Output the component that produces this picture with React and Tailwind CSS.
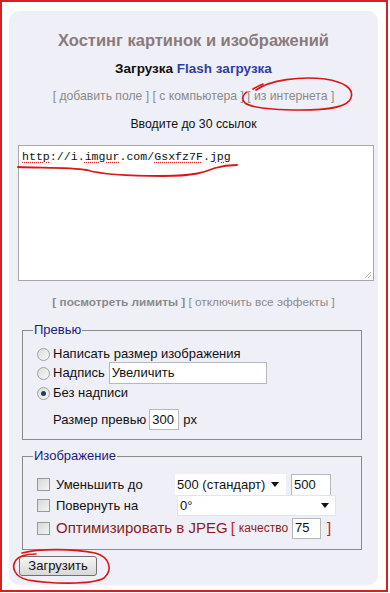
import React from 'react';

const Radio = ({ checked }) => (
  <span className="relative inline-block w-[13px] h-[13px] rounded-full border border-[#a0a0a0] bg-gradient-to-br from-[#dcdcdc] to-[#f8f8f8] shrink-0">
    {checked && <span className="absolute left-[3px] top-[3px] w-[5px] h-[5px] rounded-full bg-[#1f3f70]" />}
  </span>
);

const Check = () => (
  <span className="inline-block w-[13px] h-[13px] border border-[#999] bg-gradient-to-br from-[#d8d8d8] to-[#f4f4f4] shrink-0" />
);

const Arrow = () => (
  <svg width="8" height="5" viewBox="0 0 8 5" className="shrink-0">
    <path d="M0 0 L8 0 L4 5 Z" fill="#111" />
  </svg>
);

const Sp = ({ children }) => (
  <span className="underline decoration-dotted decoration-[#d22] underline-offset-2">{children}</span>
);

export default function App() {
  return (
    <div className="relative w-[390px] h-[593px] bg-white" style={{ fontFamily: '"Liberation Sans", Arial, sans-serif' }}>
      <div className="w-[388px] h-[592px] border-2 border-[#d42020] pl-[7px] pt-[9px]">
        <div className="w-[369px] h-[574px] rounded-[10px] bg-[#efeff8] flex flex-col">
          <h1 className="mt-[19px] text-center text-[16.5px] leading-[20px] font-bold text-[#8c7a7a]">
            Хостинг картинок и изображений
          </h1>
          <div className="mt-[11px] text-center text-[13.5px] leading-[16px] font-bold text-[#111]">
            Загрузка <span className="text-[#2f3f9f]">Flash загрузка</span>
          </div>
          <div className="mt-[12px] text-center text-[12.2px] leading-[15px] text-[#8a8a8a]">
            [ добавить поле ] [ с компьютера ] [ из интернета ]
          </div>
          <div className="mt-[11px] text-center text-[12.3px] leading-[18px] text-[#111]">
            Вводите до 30 ссылок
          </div>
          <div className="relative ml-[9px] mt-[12px] w-[356px] h-[136px] border border-[#a8a8a8] bg-white pl-[3px] pt-[3px]">
            <div className="text-[11.6px] leading-[16px] text-[#111]" style={{ fontFamily: '"Liberation Mono", "Courier New", monospace' }}>
              <Sp>http</Sp>://i.<Sp>imgur</Sp>.com/<Sp>Gsxfz7F</Sp>.<Sp>jpg</Sp>
            </div>
            <svg width="9" height="9" viewBox="0 0 9 9" className="absolute right-[1px] bottom-[1px]">
              <path d="M8 2 L2 8 M8 5 L5 8" stroke="#b0b0b0" strokeWidth="1" />
            </svg>
          </div>
          <div className="mt-[14px] text-center text-[11.8px] leading-[15px] text-[#8a8a8a]">
            <span className="font-bold">[ посмотреть лимиты ]</span> [ отключить все эффекты ]
          </div>

          <fieldset className="ml-[13px] mt-[12px] w-[340px] h-[118px] border border-[#8a8a8a] pl-[14px] pr-[10px]">
            <legend className="ml-[-4px] px-[1px] text-[13px] leading-[16px] text-[#1c1c7c]">Превью</legend>
            <div className="mt-[7px] flex flex-col text-[13px] text-[#111]">
              <div className="h-[18px] flex items-center gap-[3px]"><Radio />Написать размер изображения</div>
              <div className="h-[20px] flex items-center gap-[3px]">
                <Radio />Надпись
                <span className="ml-[1px] w-[158px] h-[22px] border border-[#b8b8b8] bg-white flex items-center pl-[2px]">Увеличить</span>
              </div>
              <div className="h-[20px] flex items-center gap-[3px]"><Radio checked />Без надписи</div>
              <div className="mt-[6px] ml-[16px] flex items-center gap-[3px]">
                Размер превью
                <span className="w-[30px] h-[21px] border border-[#b8b8b8] bg-white flex items-center pl-[2px]">300</span>
                <span className="ml-[1px]">px</span>
              </div>
            </div>
          </fieldset>

          <fieldset className="ml-[13px] mt-[8px] w-[340px] h-[102px] border border-[#8a8a8a] pl-[14px] pr-[10px]">
            <legend className="ml-[-4px] px-[1px] text-[13px] leading-[16px] text-[#1c1c7c]">Изображение</legend>
            <div className="mt-[10px] flex flex-col text-[13px] text-[#111]">
              <div className="h-[21px] flex items-center">
                <Check />
                <span className="ml-[6px] w-[119px]">Уменьшить до</span>
                <span className="w-[111px] h-[21px] bg-white flex items-center justify-between pl-[2px] pr-[7px]">
                  500 (стандарт) <Arrow />
                </span>
                <span className="ml-[5px] w-[40px] h-[22px] border border-[#b8b8b8] bg-white flex items-center pl-[2px]">500</span>
              </div>
              <div className="h-[21px] flex items-center">
                <Check />
                <span className="ml-[6px] w-[121px]">Повернуть на</span>
                <span className="w-[159px] h-[21px] bg-white border border-[#e4e4ec] flex items-center justify-between pl-[2px] pr-[6px]">
                  0° <Arrow />
                </span>
              </div>
              <div className="h-[24px] flex items-center text-[#8a1c1c]">
                <Check />
                <span className="ml-[6px] text-[15px]">Оптимизировать в JPEG</span>
                <span className="ml-[3px] text-[15px] text-[#c02020]">[</span>
                <span className="ml-[4px] text-[12px]">качество</span>
                <span className="ml-[4px] w-[29px] h-[21px] border border-[#b8b8b8] bg-white flex items-center pl-[2px] text-[#111]">75</span>
                <span className="ml-[6px] text-[15px] text-[#c02020]">]</span>
              </div>
            </div>
          </fieldset>

          <div className="ml-[10px] mt-[6px] flex">
            <button className="w-[78px] h-[20px] rounded-[3px] border border-[#707070] bg-gradient-to-b from-[#f6f6f6] to-[#d8d8d8] text-[13px] leading-[16px] text-[#111]">
              Загрузить
            </button>
          </div>
        </div>
      </div>

      <svg className="absolute inset-0 pointer-events-none" width="390" height="593" viewBox="0 0 390 593" fill="none">
        <path d="M253 89 C258 86 260 85 263 84 M256 90 C270 80 300 76 325 79 C345 82 354 89 351 98 C348 107 330 110 300 110 C275 110 252 108 245 103 C241 99 243 94 247 92"
          stroke="#d81818" strokeWidth="1.6" strokeLinecap="round" />
        <path d="M18 167 C40 168 70 167 87 170 C100 174 130 176 163 176 C195 176 205 172 215 168 C222 166 230 165 237 165"
          stroke="#d81818" strokeWidth="1.8" strokeLinecap="round" />
        <path d="M22 553 C40 548 75 549 95 553 C110 557 113 570 104 578 C92 585 50 584 28 580 C14 577 11 567 16 560 C20 555 30 554 36 554"
          stroke="#d81818" strokeWidth="1.6" strokeLinecap="round" />
      </svg>
    </div>
  );
}
